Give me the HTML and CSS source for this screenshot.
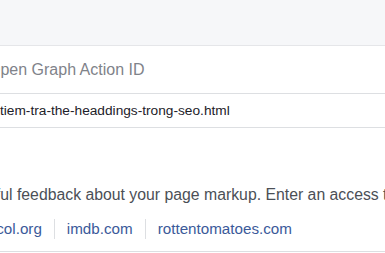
FILE: index.html
```html
<!DOCTYPE html>
<html lang="en">
<head>
  <meta charset="UTF-8" />
  <title>Sharing Debugger</title>
  <meta name="viewport" content="width=device-width, initial-scale=1.0" />
  <link rel="stylesheet" href="styles.css">
</head>
<body>

  <!-- Grey header strip -->
  <div class="top-bar"></div>

  <!-- Input rows -->
  <div class="field-row action-row">
    <span class="placeholder">Open Graph Action ID</span>
  </div>
  <div class="field-row url-row">
    <span class="url-text">tiem-tra-the-headdings-trong-seo.html</span>
  </div>

  <!-- Intro text and example links -->
  <div class="intro">
    <p class="intro-text">helpful feedback about your page markup. Enter an access token to</p>
    <div class="examples">
      <a href="#" class="example first">opengraphprotocol.org</a>
      <a href="#" class="example">imdb.com</a>
      <a href="#" class="example">rottentomatoes.com</a>
    </div>
  </div>

</body>
</html>
```

FILE: styles.css
```css
/* Basic reset */
* {
  box-sizing: border-box;
  margin: 0;
  padding: 0;
}
body {
  font-family: 'Liberation Sans', Arial, Helvetica, sans-serif;
  background: #fff;
  color: #4b4f56;
  width: 385px;
  height: 253px;
  overflow: hidden;
  white-space: nowrap;
}

/* Header strip */
.top-bar {
  height: 46px;
  background: #f6f7f9;
  border-bottom: 1px solid #e5e6e9;
}

/* Input rows */
.field-row {
  display: flex;
  align-items: center;
  border-bottom: 1px solid #dddfe2;
}
.action-row {
  height: 48px;
}
.url-row {
  height: 34px;
}
.placeholder {
  margin-left: -12px;
  font-size: 16px;
  color: #7f838a;
}
.url-text {
  font-size: 13.7px;
  color: #1d2129;
}

/* Intro section */
.intro {
  height: 124px;
  padding-top: 57px;
  border-bottom: 1px solid #dddfe2;
}
.intro-text {
  margin-left: -34px;
  font-size: 15.8px;
  line-height: 20px;
}
.examples {
  display: flex;
  align-items: center;
  margin-top: 14px;
  height: 20px;
}
.example {
  font-size: 15.2px;
  line-height: 20px;
  color: #3b5a9a;
  text-decoration: none;
  padding: 0 12px;
  border-left: 1px solid #dddfe2;
}
.example.first {
  margin-left: -111px;
  padding-left: 0;
  border-left: none;
}
```
